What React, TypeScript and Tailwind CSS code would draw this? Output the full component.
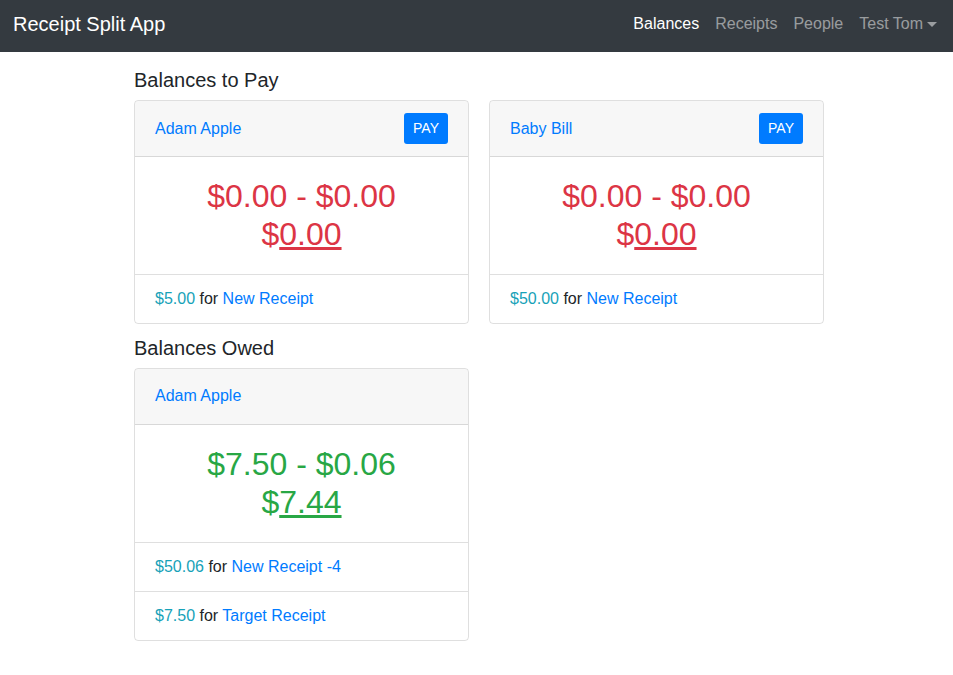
const font = { fontFamily: '"Liberation Sans", Arial, sans-serif' };

type Line = { amount: string; receipt: string };

type Balance = {
  name: string;
  pay?: boolean;
  total: string;
  minus: string;
  net: string;
  lines: Line[];
};

const toPay: Balance[] = [
  { name: "Adam Apple", pay: true, total: "$0.00", minus: "$0.00", net: "0.00", lines: [{ amount: "$5.00", receipt: "New Receipt" }] },
  { name: "Baby Bill", pay: true, total: "$0.00", minus: "$0.00", net: "0.00", lines: [{ amount: "$50.00", receipt: "New Receipt" }] },
];

const owed: Balance[] = [
  {
    name: "Adam Apple",
    total: "$7.50",
    minus: "$0.06",
    net: "7.44",
    lines: [
      { amount: "$50.06", receipt: "New Receipt -4" },
      { amount: "$7.50", receipt: "Target Receipt" },
    ],
  },
];

function BalanceCard({ b, tone }: { b: Balance; tone: "red" | "green" }) {
  const color = tone === "red" ? "text-[#dc3545]" : "text-[#28a745]";
  return (
    <div className="border border-black/[0.125] rounded">
      <div className="h-[56px] px-5 flex items-center justify-between bg-black/[0.03] border-b border-black/[0.125] rounded-t">
        <a className="text-[#007bff] text-base leading-6">{b.name}</a>
        {b.pay && (
          <button className="bg-[#007bff] text-white text-sm leading-[21px] px-2 py-1 rounded-[3px] w-[44px] h-[31px]">
            PAY
          </button>
        )}
      </div>
      <div className={`p-5 text-center text-[32px] leading-[38.4px] ${color}`}>
        <div>
          {b.total} - {b.minus}
        </div>
        <div>
          $<span className="underline">{b.net}</span>
        </div>
      </div>
      {b.lines.map((l, i) => (
        <div key={i} className="border-t border-black/[0.125] px-5 py-3 text-base leading-6 text-[#212529]">
          <span className="text-[#17a2b8]">{l.amount}</span> for <a className="text-[#007bff]">{l.receipt}</a>
        </div>
      ))}
    </div>
  );
}

export default function App() {
  return (
    <div className="min-h-[675px] bg-white text-[#212529]" style={font}>
      <nav className="h-[52px] bg-[#343a40] flex items-center justify-between pl-[13px] pr-2 pb-1">
        <span className="text-white text-xl leading-[30px]">Receipt Split App</span>
        <ul className="flex text-base leading-6">
          <li className="px-2 text-white">Balances</li>
          <li className="px-2 text-white/50">Receipts</li>
          <li className="px-2 text-white/50">People</li>
          <li className="px-2 text-white/50 flex items-center">
            Test Tom
            <span className="ml-[4px] w-0 h-0 border-l-[5px] border-r-[5px] border-t-[5px] border-l-transparent border-r-transparent border-t-white/50" />
          </li>
        </ul>
      </nav>

      <div className="ml-[134px] w-[690px]">
        <h5 className="mt-4 mb-2 text-xl leading-6">Balances to Pay</h5>
        <div className="grid grid-cols-2 gap-5">
          {toPay.map((b, i) => (
            <BalanceCard key={i} b={b} tone="red" />
          ))}
        </div>

        <h5 className="mt-3 mb-2 text-xl leading-6">Balances Owed</h5>
        <div className="grid grid-cols-2 gap-5">
          {owed.map((b, i) => (
            <BalanceCard key={i} b={b} tone="green" />
          ))}
        </div>
      </div>
    </div>
  );
}
